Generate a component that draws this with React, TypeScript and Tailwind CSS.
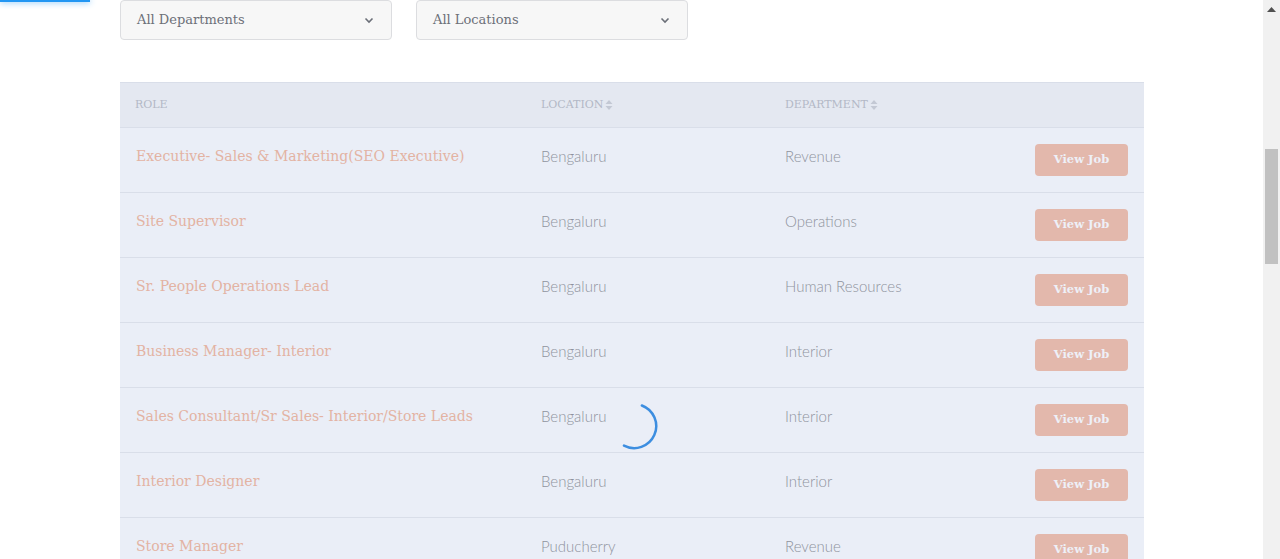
import React from "react";

const jobs = [
   { role: "Executive- Sales & Marketing(SEO Executive)", location: "Bengaluru", dept: "Revenue" },
   { role: "Site Supervisor", location: "Bengaluru", dept: "Operations" },
   { role: "Sr. People Operations Lead", location: "Bengaluru", dept: "Human Resources" },
   { role: "Business Manager- Interior", location: "Bengaluru", dept: "Interior" },
   { role: "Sales Consultant/Sr Sales- Interior/Store Leads", location: "Bengaluru", dept: "Interior" },
   { role: "Interior Designer", location: "Bengaluru", dept: "Interior" },
   { role: "Store Manager", location: "Puducherry", dept: "Revenue" },
];

const serif = "font-['DejaVu_Serif','Liberation_Serif',serif]";
const sans = "font-['Lato','Noto_Sans',sans-serif]";

const Chevron = () => (
   <svg width="12" height="12" viewBox="0 0 12 12" fill="none" stroke="#6b6f78" strokeWidth="1.6">
      <path d="M2.5 4.5 6 8l3.5-3.5" />
   </svg>
);

const SortIcon = () => (
   <svg width="8" height="12" viewBox="0 0 8 12" fill="#c3c8d4" className="ml-0.5">
      <path d="M4 1 7.5 5h-7z" />
      <path d="M4 11 .5 7h7z" />
   </svg>
);

const Select = ({ label }: { label: string }) => (
   <div className="flex h-10 w-[272px] items-center justify-between rounded-sm border border-[#dcdde0] bg-[#f7f7f7] pl-4 pr-4">
      <span className={`${serif} text-[13px] text-[#6d7079]`}>{label}</span>
      <Chevron />
   </div>
);

export default function App() {
   return (
      <div className="flex h-[559px] w-[1280px] overflow-hidden bg-white">
         <div className="relative flex-1">
            {/* loading bar */}
            <div className="absolute left-0 top-0 h-[2px] w-[90px] bg-[#2196f3] shadow-[0_0_6px_#2196f3]" />

            <div className="flex flex-col pl-[120px]">
               <div className="flex gap-6">
                  <Select label="All Departments" />
                  <Select label="All Locations" />
               </div>

               <div className="mt-[42px] w-[1024px]">
                  <div className="flex h-[46px] items-center border-y border-[#d9dee9] bg-[#e4e8f1] text-[11px] uppercase text-[#b3b8c6]">
                     <div className={`${serif} w-[421px] pl-[15px]`}>Role</div>
                     <div className={`${serif} flex w-[244px] items-center`}>
                        Location <SortIcon />
                     </div>
                     <div className={`${serif} flex items-center`}>
                        Department <SortIcon />
                     </div>
                  </div>
                  {jobs.map((j) => (
                     <div
                        key={j.role}
                        className="flex h-[65px] items-start border-b border-[#d9dee9] bg-[#eaeef7] pt-[18px]"
                     >
                        <div className={`${serif} w-[421px] pl-4 text-[14px] text-[#e3b3a3]`}>{j.role}</div>
                        <div className={`${sans} -mt-px w-[244px] text-[15px] font-light text-[#8f939d]`}>
                           {j.location}
                        </div>
                        <div className={`${sans} -mt-px flex-1 text-[15px] font-light text-[#8f939d]`}>{j.dept}</div>
                        <button
                           className={`${serif} mr-4 -mt-[2px] h-8 w-[93px] rounded-sm bg-[#e3b8ac] text-[11.5px] font-bold text-[#eef0f8]`}
                        >
                           View Job
                        </button>
                     </div>
                  ))}
               </div>
            </div>

            {/* spinner */}
            <svg className="absolute left-[610px] top-[402px]" width="48" height="48" viewBox="0 0 48 48" fill="none">
               <path d="M31.9 3.5A22 22 0 1 1 14 43.6" stroke="#3d8ee0" strokeWidth="2.5" strokeLinecap="round" />
            </svg>
         </div>

         {/* scrollbar */}
         <div className="flex w-[17px] flex-col items-center bg-[#f1f1f1]">
            <svg width="9" height="6" viewBox="0 0 9 6" className="mt-[7px]" fill="#505050">
               <path d="M4.5 0 9 5H0z" />
            </svg>
            <div className="mt-[136px] h-[115px] w-[13px] bg-[#c1c1c1]" />
         </div>
      </div>
   );
}
